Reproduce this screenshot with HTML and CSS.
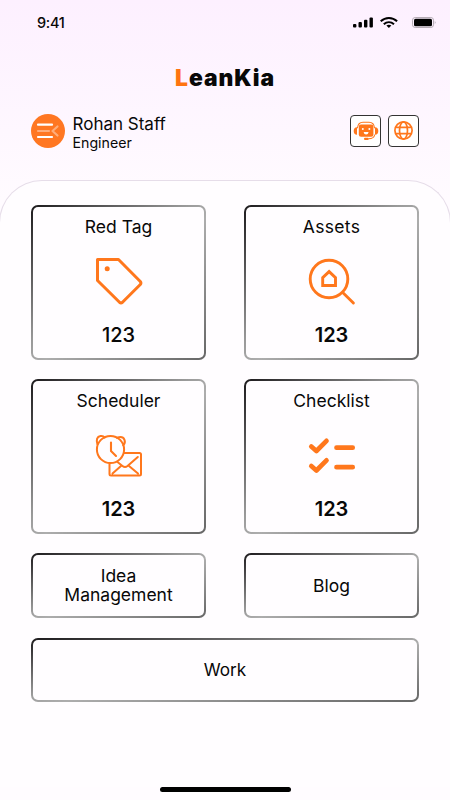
FILE: index.html
```
<!DOCTYPE html>
<html lang="en">
<head>
<meta charset="utf-8">
<title>LeanKia</title>
<link rel="stylesheet" href="styles.css">
</head>
<body>
<div class="app">
  <header class="status">
    <span class="time">9:41</span>
    <svg class="indicators" viewBox="0 0 86 14" aria-hidden="true">
      <rect x="2" y="9" width="3.400" height="3.500" rx="1"/>
      <rect x="7.500" y="7" width="3.400" height="5.500" rx="1"/>
      <rect x="13" y="4.800" width="3.400" height="7.700" rx="1"/>
      <rect x="18.500" y="2.400" width="3.400" height="10.100" rx="1"/>
      <g fill="none" stroke="#000" stroke-width="2">
        <path d="M29.700 6.200C34.500 1.800 41.300 1.800 46.100 6.200"/>
        <path d="M32.800 9.200C35.800 6.500 40 6.500 43 9.200"/>
      </g>
      <path d="M35.400 10.600Q37.900 8.800 40.400 10.600L37.900 13z"/>
      <rect x="61.500" y="2.500" width="21" height="10" rx="2.700" fill="none" stroke="#b5acb5"/>
      <rect x="63" y="3.800" width="18" height="7.400" rx="1.500"/>
      <path d="M83.800 5.800q1.600 1.700 0 3.400z" fill="#a49ca4"/>
    </svg>
  </header>

  <h1 class="brand"><span class="brand-initial">L</span>eanKia</h1>

  <section class="profile">
    <svg class="avatar" viewBox="0 0 34 34" aria-hidden="true">
      <circle cx="17" cy="17" r="17" fill="#ff7722"/>
      <g fill="none" stroke="#fff" stroke-width="2.200" stroke-linecap="round" stroke-linejoin="round">
        <path d="M7 10.700h14M7 23h14"/>
        <path d="M7 17h11M26.500 12.500l-5 4.500 5 4.500" opacity=".4"/>
      </g>
    </svg>
    <div class="person">
      <p class="name">Rohan Staff</p>
      <p class="role">Engineer</p>
    </div>
    <button class="tool" aria-label="Assistant">
      <svg class="bot" viewBox="0 0 26 20" aria-hidden="true">
        <path d="M4 6.200v7.600Q.7 13.600 .7 10T4 6.200zM22 6.200v7.600Q25.300 13.600 25.300 10T22 6.200z" fill="#ff771c"/>
        <path d="M4.400 7.200Q5 1.200 10 1.200h6Q21 1.200 21.600 7.200M21.800 13.500Q21 17.800 15.500 17.800" fill="none" stroke="#ff771c" stroke-width="1.100"/>
        <rect x="5.800" y="3.600" width="14.600" height="12.200" rx="2.200" fill="#ff771c"/>
        <rect x="11" y="16.700" width="4.800" height="2.300" rx="1.100" fill="#ff771c"/>
        <circle cx="9.800" cy="8" r="1" fill="#fff"/><circle cx="16.400" cy="8" r="1" fill="#fff"/>
        <path d="M10.600 11h5q-.4 2.600-2.500 2.600t-2.500-2.600z" fill="#fff"/>
      </svg>
    </button>
    <button class="tool" aria-label="Language">
      <svg class="globe" viewBox="0 0 20 20" fill="none" stroke="#ff771c" stroke-width="1.700" aria-hidden="true">
        <circle cx="9.500" cy="9.500" r="8.600"/>
        <ellipse cx="9.500" cy="9.500" rx="4" ry="8.600"/>
        <path d="M1.900 6.300h15.200M1.900 12.700h15.200"/>
      </svg>
    </button>
  </section>

  <main class="panel">
    <a class="card">
      <span class="label">Red Tag</span>
      <svg class="icon" viewBox="0 0 50 50" fill="none" stroke="#ff771c" stroke-width="3" stroke-linejoin="round" aria-hidden="true">
        <path d="M3.500 3.500H24.500L46.300 25.500Q47.500 27 46.300 28.500L28.500 46.300Q27 47.500 25.500 46.300L3.500 24.500z"/>
        <circle cx="13.200" cy="12.700" r="2.500" fill="#ff771c" stroke="none"/>
      </svg>
      <span class="count light">123</span>
    </a>
    <a class="card">
      <span class="label assets">Assets</span>
      <svg class="icon" viewBox="0 0 50 50" fill="none" stroke="#ff771c" stroke-width="2.900" aria-hidden="true">
        <circle cx="22" cy="23" r="18.800"/>
        <path d="M35.700 36.500L46.400 47" stroke-linecap="round"/>
        <path d="M15.700 29.500V21.600L22.100 15.600L28.500 21.600V29.500z"/>
      </svg>
      <span class="count">123</span>
    </a>
    <a class="card">
      <span class="label">Scheduler</span>
      <svg class="icon" viewBox="0 0 50 50" fill="none" stroke="#ff771c" stroke-width="2" stroke-linecap="round" stroke-linejoin="round" aria-hidden="true">
        <circle cx="16.500" cy="19.500" r="13.600"/>
        <path d="M3.400 14.200Q1.300 7 6.500 6.100Q9.200 5.700 10.700 7.500M23 7.800Q28.700 5.700 30.500 9.800Q31.700 12.700 29.200 15.200"/>
        <path d="M17 12.500V21L22 26" stroke-width="2.100"/>
        <path d="M30.500 23H45.500Q47 23 47 24.500V44Q47 45.500 45.500 45.500H17Q15.500 45.500 15.500 44V33.500M23.500 32L28.500 36Q31 38 33.500 36L43.800 27M18.500 43.500L27 36M35 36L44 43.500"/>
      </svg>
      <span class="count">123</span>
    </a>
    <a class="card">
      <span class="label">Checklist</span>
      <svg class="icon" viewBox="0 0 50 50" fill="none" stroke="#ff771c" stroke-width="4.700" stroke-linecap="round" stroke-linejoin="round" aria-hidden="true">
        <path d="M4.300 16.500L9.400 21L19.500 10.800M4.300 36L9.400 40.500L19.500 30.300M29.500 17.700H45.700M29.500 37.200H45.700"/>
      </svg>
      <span class="count">123</span>
    </a>
    <a class="card short"><span class="label idea">Idea<br>Management</span></a>
    <a class="card short"><span class="label">Blog</span></a>
    <a class="card short wide"><span class="label work">Work</span></a>
  </main>
  <div class="home-bar"></div>
</div>
</body>
</html>
```

FILE: styles.css
```
* { box-sizing: border-box; }

body {
  margin: 0;
  font-family: Inter, "Liberation Sans", sans-serif;
  color: #080808;
}

.app {
  width: 450px;
  height: 800px;
  display: flex;
  flex-direction: column;
  overflow: hidden;
  background: linear-gradient(#fdf0ff 0, #fef7ff 130px, #fffbff 200px, #fffcff 100%);
}

.status {
  height: 44px;
  flex: none;
  display: flex;
  justify-content: space-between;
  align-items: center;
  padding: 0 13px 0 37px;
}

.time { font-size: 14.5px; font-weight: 500; letter-spacing: -0.3px; }
.indicators { width: 86px; height: 14px; }

.brand {
  height: 68px;
  flex: none;
  margin: 0;
  padding-top: 19px;
  text-align: center;
  font-size: 22.8px;
  line-height: 30px;
  font-weight: 900;
  letter-spacing: 1px;
}

.brand-initial { color: #ff7410; }

.profile {
  height: 68px;
  flex: none;
  display: flex;
  align-items: flex-start;
  padding: 2px 31px 0;
}

.avatar { width: 34px; height: 34px; }
.person { flex: 1; padding: 0 0 0 7.5px; }
.person p { margin: 0; }
.name { font-size: 17px; line-height: 21px; }
.role { font-size: 14.2px; line-height: 15px; }

.tool {
  width: 31px;
  height: 32px;
  margin: 1px 0 0 7px;
  padding: 0;
  display: flex;
  align-items: center;
  justify-content: center;
  border: 1px solid #333;
  border-radius: 4px;
  background: #fff;
}

.bot { width: 26px; height: 20px; flex: none; }
.globe { width: 20px; height: 20px; }

.panel {
  flex: 1;
  display: grid;
  grid-template-columns: 175px 175px;
  grid-template-rows: 155px 155px 65px 65px;
  column-gap: 38px;
  row-gap: 19px;
  margin: 0 -1px;
  padding: 24px 31px 0;
  border: 1px solid #e6dde9;
  border-bottom: 0;
  border-radius: 43px 43px 0 0;
  background: #fffdff;
}

.card {
  display: flex;
  flex-direction: column;
  align-items: center;
  padding: 2px;
  border-radius: 7px;
  background:
    linear-gradient(#fffdff, #fffdff) content-box,
    linear-gradient(to bottom right, #1c1a1c 0%, #999 44%, #adadad 54%, #666 100%);
}

.label {
  margin-top: 9px;
  font-size: 17.5px;
  line-height: 22px;
  white-space: nowrap;
}

.assets { letter-spacing: 0.3px; }
.icon { width: 50px; height: 50px; margin-top: 18px; }
.count { margin-top: 16px; font-size: 20px; line-height: 26px; font-weight: 600; }
.light { font-weight: 500; }

.short { justify-content: center; }
.short .label { margin-top: 0; }
.wide { grid-column: 1 / 3; margin-top: 1px; }
.idea { line-height: 18.5px; text-align: center; }
.work { font-size: 17.2px; }

.home-bar {
  width: 131px;
  height: 5px;
  flex: none;
  align-self: center;
  margin-bottom: 8px;
  border-radius: 3px;
  background: #000;
}
```
